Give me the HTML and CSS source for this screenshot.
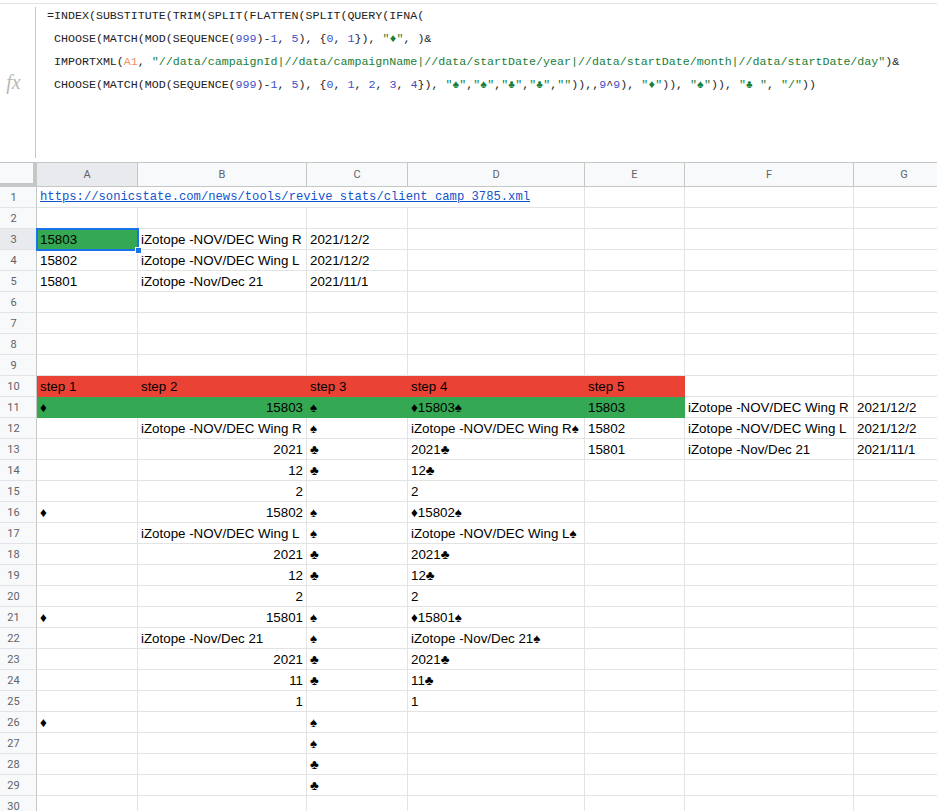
FILE: index.html
```html
<!DOCTYPE html>
<html lang="en">
<head>
  <meta charset="UTF-8" />
  <title>IMPORTXML sheet</title>
  <link rel="stylesheet" href="styles.css">
</head>
<body>
  <div class="formula-bar">
    <div class="fx">fx</div>
    <div class="formula">
      <div class="line">=INDEX(SUBSTITUTE(TRIM(SPLIT(FLATTEN(SPLIT(QUERY(IFNA(</div>
      <div class="line"> CHOOSE(MATCH(MOD(SEQUENCE(<span class="n">999</span>)-<span class="n">1</span>, <span class="n">5</span>), {<span class="n">0</span>, <span class="n">1</span>}), <span class="s">"♦"</span>, )&amp;</div>
      <div class="line"> IMPORTXML(<span class="ref">A1</span>, <span class="s">"//data/campaignId|//data/campaignName|//data/startDate/year|//data/startDate/month|//data/startDate/day"</span>)&amp;</div>
      <div class="line"> CHOOSE(MATCH(MOD(SEQUENCE(<span class="n">999</span>)-<span class="n">1</span>, <span class="n">5</span>), {<span class="n">0</span>, <span class="n">1</span>, <span class="n">2</span>, <span class="n">3</span>, <span class="n">4</span>}), <span class="s">"♠"</span>,<span class="s">"♠"</span>,<span class="s">"♣"</span>,<span class="s">"♣"</span>,<span class="s">""</span>)),,<span class="n">9</span>^<span class="n">9</span>), <span class="s">"♦"</span>)), <span class="s">"♠"</span>)), <span class="s">"♣ "</span>, <span class="s">"/"</span>))</div>
    </div>
  </div>

  <table class="sheet">
    <colgroup>
      <col class="w-rh"><col class="w-a"><col class="w-b"><col class="w-c"><col class="w-d"><col class="w-e"><col class="w-f"><col class="w-g">
    </colgroup>
    <thead>
      <tr>
        <th class="corner"></th>
        <th class="sel">A</th><th>B</th><th>C</th><th>D</th><th>E</th><th>F</th><th>G</th>
      </tr>
    </thead>
    <tbody>
      <tr><th>1</th><td colspan="4"><a class="link" href="#">https://sonicstate.com/news/tools/revive_stats/client_camp_3785.xml</a></td><td></td><td></td><td></td></tr>
      <tr><th>2</th><td></td><td></td><td></td><td></td><td></td><td></td><td></td></tr>
      <tr><th class="sel">3</th><td class="green current">15803<div class="cursor"><div class="handle"></div></div></td><td>iZotope -NOV/DEC Wing R</td><td>2021/12/2</td><td></td><td></td><td></td><td></td></tr>
      <tr><th>4</th><td>15802</td><td>iZotope -NOV/DEC Wing L</td><td>2021/12/2</td><td></td><td></td><td></td><td></td></tr>
      <tr><th>5</th><td>15801</td><td>iZotope -Nov/Dec 21</td><td>2021/11/1</td><td></td><td></td><td></td><td></td></tr>
      <tr><th>6</th><td></td><td></td><td></td><td></td><td></td><td></td><td></td></tr>
      <tr><th>7</th><td></td><td></td><td></td><td></td><td></td><td></td><td></td></tr>
      <tr><th>8</th><td></td><td></td><td></td><td></td><td></td><td></td><td></td></tr>
      <tr><th>9</th><td></td><td></td><td></td><td></td><td></td><td></td><td></td></tr>
      <tr><th>10</th><td class="red">step 1</td><td class="red">step 2</td><td class="red">step 3</td><td class="red">step 4</td><td class="red">step 5</td><td></td><td></td></tr>
      <tr><th>11</th><td class="green">♦</td><td class="green num">15803</td><td class="green">♠</td><td class="green">♦15803♠</td><td class="green">15803</td><td>iZotope -NOV/DEC Wing R</td><td>2021/12/2</td></tr>
      <tr><th>12</th><td></td><td>iZotope -NOV/DEC Wing R</td><td>♠</td><td>iZotope -NOV/DEC Wing R♠</td><td>15802</td><td>iZotope -NOV/DEC Wing L</td><td>2021/12/2</td></tr>
      <tr><th>13</th><td></td><td class="num">2021</td><td>♣</td><td>2021♣</td><td>15801</td><td>iZotope -Nov/Dec 21</td><td>2021/11/1</td></tr>
      <tr><th>14</th><td></td><td class="num">12</td><td>♣</td><td>12♣</td><td></td><td></td><td></td></tr>
      <tr><th>15</th><td></td><td class="num">2</td><td></td><td>2</td><td></td><td></td><td></td></tr>
      <tr><th>16</th><td>♦</td><td class="num">15802</td><td>♠</td><td>♦15802♠</td><td></td><td></td><td></td></tr>
      <tr><th>17</th><td></td><td>iZotope -NOV/DEC Wing L</td><td>♠</td><td>iZotope -NOV/DEC Wing L♠</td><td></td><td></td><td></td></tr>
      <tr><th>18</th><td></td><td class="num">2021</td><td>♣</td><td>2021♣</td><td></td><td></td><td></td></tr>
      <tr><th>19</th><td></td><td class="num">12</td><td>♣</td><td>12♣</td><td></td><td></td><td></td></tr>
      <tr><th>20</th><td></td><td class="num">2</td><td></td><td>2</td><td></td><td></td><td></td></tr>
      <tr><th>21</th><td>♦</td><td class="num">15801</td><td>♠</td><td>♦15801♠</td><td></td><td></td><td></td></tr>
      <tr><th>22</th><td></td><td>iZotope -Nov/Dec 21</td><td>♠</td><td>iZotope -Nov/Dec 21♠</td><td></td><td></td><td></td></tr>
      <tr><th>23</th><td></td><td class="num">2021</td><td>♣</td><td>2021♣</td><td></td><td></td><td></td></tr>
      <tr><th>24</th><td></td><td class="num">11</td><td>♣</td><td>11♣</td><td></td><td></td><td></td></tr>
      <tr><th>25</th><td></td><td class="num">1</td><td></td><td>1</td><td></td><td></td><td></td></tr>
      <tr><th>26</th><td>♦</td><td></td><td>♠</td><td></td><td></td><td></td><td></td></tr>
      <tr><th>27</th><td></td><td></td><td>♠</td><td></td><td></td><td></td><td></td></tr>
      <tr><th>28</th><td></td><td></td><td>♣</td><td></td><td></td><td></td><td></td></tr>
      <tr><th>29</th><td></td><td></td><td>♣</td><td></td><td></td><td></td><td></td></tr>
      <tr><th>30</th><td></td><td></td><td></td><td></td><td></td><td></td><td></td></tr>
    </tbody>
  </table>
</body>
</html>
```

FILE: styles.css
```css
body {
  margin: 0;
  background: #ffffff;
  font-family: "Liberation Sans", Arial, sans-serif;
  overflow: hidden;
}

/* formula bar */
.formula-bar {
  display: flex;
  height: 158px;
  margin-top: 3px;
  border-top: 1px solid #e1e3e6;
}

.fx {
  width: 36px;
  margin: 3px 0 4px;
  border-right: 1px solid #c7c7c7;
  display: flex;
  align-items: center;
  justify-content: center;
  padding-right: 8px;
  box-sizing: border-box;
  font-family: "Liberation Serif", serif;
  font-style: italic;
  font-size: 20px;
  color: #b8b8b8;
}

.formula {
  padding-left: 11px;
  font-family: "Liberation Mono", "DejaVu Sans Mono", monospace;
  font-size: 11.65px;
  line-height: 23px;
  color: #222222;
}

.formula .line {
  white-space: pre;
}

.formula .n { color: #3c4fc7; }
.formula .s { color: #188038; }
.formula .ref { color: #f29060; }

/* grid */
.sheet {
  border-collapse: separate;
  border-spacing: 0;
  table-layout: fixed;
  width: 955px;
  font-size: 13.33px;
  color: #000000;
}

.w-rh { width: 37px; }
.w-a { width: 101px; }
.w-b { width: 169px; }
.w-c { width: 101px; }
.w-d { width: 177px; }
.w-e { width: 100px; }
.w-f { width: 169px; }
.w-g { width: 101px; }

.sheet thead tr { height: 25px; }
.sheet tbody tr { height: 21px; }

.sheet thead th {
  background: #f8f9fa;
  border-top: 1px solid #c4c7c5;
  border-right: 1px solid #c4c7c5;
  border-bottom: 1px solid #c4c7c5;
  font-family: Roboto, "Liberation Sans", sans-serif;
  font-size: 11px;
  font-weight: normal;
  color: #5f6368;
  padding: 0;
  text-align: center;
  vertical-align: middle;
}

.sheet thead th.corner {
  border-right: 4px solid #c4c7c5;
  border-bottom: 4px solid #c4c7c5;
}

.sheet tbody th {
  background: #f8f9fa;
  border-right: 1px solid #c4c7c5;
  border-bottom: 1px solid #e1e3e6;
  font-family: Roboto, "Liberation Sans", sans-serif;
  font-size: 11px;
  font-weight: normal;
  color: #5f6368;
  padding: 0 9px 0 0;
  text-align: center;
  vertical-align: middle;
}

.sheet th.sel {
  background: #e8eaed;
}

.sheet td {
  padding: 0 3px 1px 3px;
  border-right: 1px solid #e2e3e3;
  border-bottom: 1px solid #e2e3e3;
  white-space: nowrap;
  overflow: hidden;
  vertical-align: bottom;
  line-height: 17px;
}

.sheet td.num { text-align: right; }

.sheet td.red {
  background: #ea4335;
  border-color: #ea4335;
}

.sheet td.green {
  background: #34a853;
  border-color: #34a853;
}

.link {
  font-family: "Liberation Mono", "DejaVu Sans Mono", monospace;
  font-size: 12.2px;
  color: #1155cc;
  text-decoration: underline;
}

/* active cell */
.sheet td.current {
  position: relative;
  overflow: visible;
}

.cursor {
  position: absolute;
  top: -1px;
  left: -1px;
  right: -2px;
  bottom: -2px;
  border: 2px solid #1a73e8;
}

.handle {
  position: absolute;
  right: -5px;
  bottom: -5px;
  width: 5px;
  height: 5px;
  background: #1a73e8;
  border: 1px solid #ffffff;
}
```
